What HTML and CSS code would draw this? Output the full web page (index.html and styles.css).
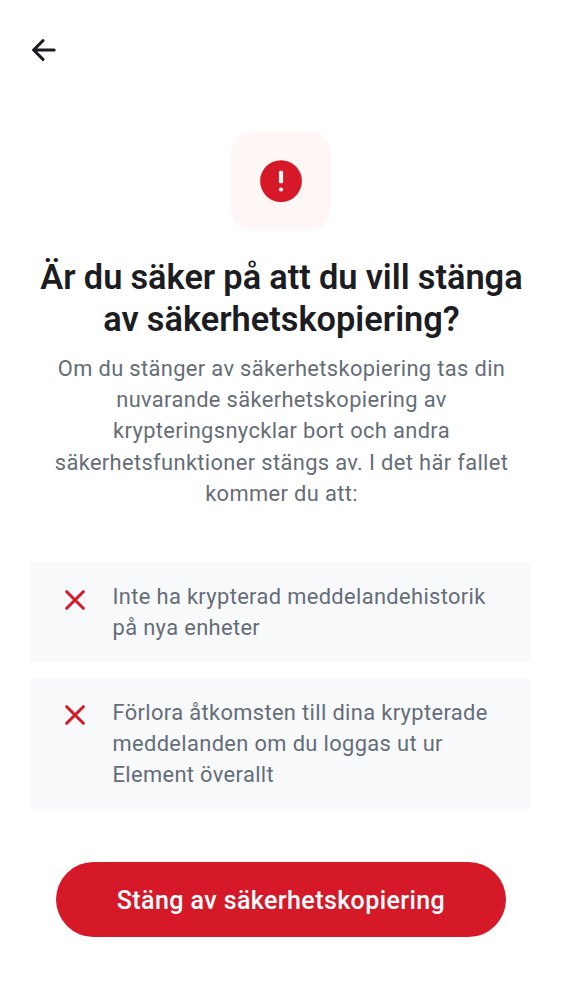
FILE: index.html
```html
<!DOCTYPE html>
<html lang="sv">
<head>
<meta charset="utf-8">
<title>Säkerhetskopiering</title>
<link rel="stylesheet" href="styles.css">
</head>
<body>
<main class="screen">
  <header class="topbar">
    <svg class="back" viewBox="0 0 24 22" fill="none" stroke="currentColor" stroke-width="3" stroke-linecap="round" stroke-linejoin="round"><path d="M11 1.6 1.6 11l9.4 9.4M2 11h20.2"/></svg>
  </header>
  <div class="hero">
    <svg class="alert" viewBox="0 0 42 42"><circle cx="21" cy="21.1" r="20.9" fill="#d51928"/><rect x="18.9" y="10.8" width="4.2" height="12.5" rx="1.4" fill="#fff6f6"/><circle cx="21" cy="29.5" r="2.1" fill="#fff6f6"/></svg>
  </div>
  <h1 class="title">Är du säker på att du vill stänga<br>av säkerhetskopiering?</h1>
  <p class="intro">Om du stänger av säkerhetskopiering tas din<br>nuvarande säkerhetskopiering av<br>krypteringsnycklar bort och andra<br>säkerhetsfunktioner stängs av. I det här fallet<br>kommer du att:</p>
  <ul class="list">
    <li class="item"><svg class="cross" viewBox="0 0 20 20"><path d="m1.7 1.7 16.6 16.6M18.3 1.7 1.7 18.3"/></svg><span>Inte ha krypterad meddelandehistorik<br>på nya enheter</span></li>
    <li class="item"><svg class="cross" viewBox="0 0 20 20"><path d="m1.7 1.7 16.6 16.6M18.3 1.7 1.7 18.3"/></svg><span>Förlora åtkomsten till dina krypterade<br>meddelanden om du loggas ut ur<br>Element överallt</span></li>
  </ul>
  <button class="confirm">Stäng av säkerhetskopiering</button>
</main>
</body>
</html>
```
FILE: styles.css
```css
* { box-sizing: border-box; }
body { margin: 0; background: #fff; font-family: Roboto, sans-serif; color: #1b1d22; }
.screen { height: 1000px; padding: 0 31px; display: flex; flex-direction: column; align-items: center; }
.topbar { width: 100%; height: 131px; padding-top: 39px; }
.back { display: block; width: 24px; height: 22px; margin-left: 1px; }
.hero { width: 100px; height: 100px; border-radius: 22px; background: #fff6f6; display: grid; place-items: center; }
.alert { width: 42px; height: 42px; }
.title { margin: 25px -20px 0; padding-left: 1px; font-size: 34.375px; line-height: 42px; font-weight: 600; word-spacing: -.4px; text-align: center; white-space: nowrap; }
.intro { margin: 13px 0 0; padding-left: 1px; font-size: 21.875px; line-height: 31.2px; letter-spacing: .36px; text-align: center; color: #656d77; white-space: nowrap; }
.list { list-style: none; margin: 53.3px 0 0; padding: 0; width: 500px; display: flex; flex-direction: column; gap: 16px; }
.item { display: flex; gap: 27.5px; padding: 19px 34px 18.6px; background: #f7f9fb; font-size: 21.875px; line-height: 31.1px; letter-spacing: .36px; color: #656d77; white-space: nowrap; }
.cross { width: 20px; height: 20px; margin-top: 8.4px; fill: none; stroke: #d51928; stroke-width: 3; stroke-linecap: round; }
.confirm { margin-top: 53.4px; width: 450px; height: 75px; border: 0; border-radius: 38px; background: #d51928; color: #fff; font: 500 25px/30px Roboto, sans-serif; letter-spacing: .41px; padding: 2px 0 0; }
```
